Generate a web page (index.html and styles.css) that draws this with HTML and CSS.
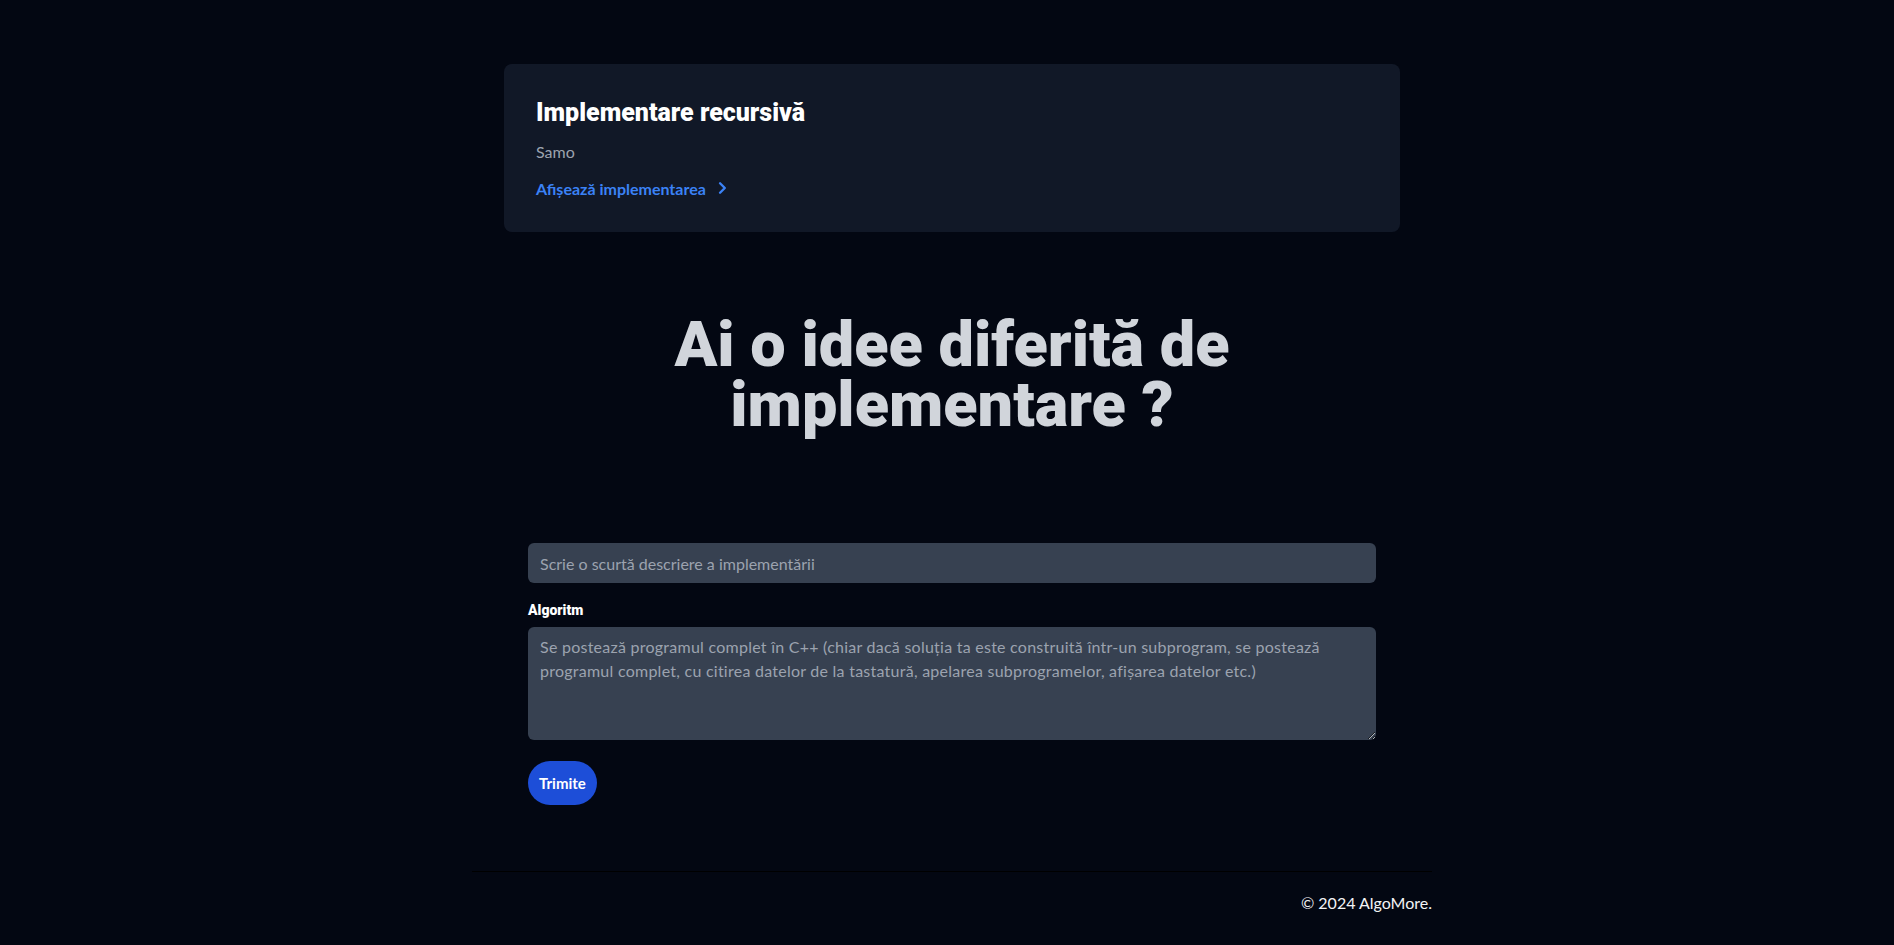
FILE: index.html
```html
<!DOCTYPE html>
<html lang="ro">
<head>
<meta charset="utf-8">
<title>AlgoMore</title>
<link rel="stylesheet" href="styles.css">
</head>
<body>
<div class="page">
  <main class="container">
    <div class="card">
      <h5 class="card-title">Implementare recursivă</h5>
      <p class="card-author">Samo</p>
      <a class="card-link" href="#">Afișează implementarea
        <svg class="chev" width="14" height="14" viewBox="0 0 10 10" aria-hidden="true"><path d="M3.6 1.6 L7 5 L3.6 8.4" fill="none" stroke="currentColor" stroke-width="1.7" stroke-linecap="round" stroke-linejoin="round"/></svg>
      </a>
    </div>

    <h2 class="headline">Ai o idee diferită de implementare ?</h2>

    <form class="form">
      <input class="field" type="text" placeholder="Scrie o scurtă descriere a implementării">
      <label class="label" for="alg">Algoritm</label>
      <textarea id="alg" class="area" rows="4" placeholder="Se postează programul complet în C++ (chiar dacă soluția ta este construită într-un subprogram, se postează programul complet, cu citirea datelor de la tastatură, apelarea subprogramelor, afișarea datelor etc.)"></textarea>
      <button class="btn" type="button">Trimite</button>
    </form>
  </main>
  <footer class="footer">
    <span>© 2024 AlgoMore.</span>
  </footer>
</div>
</body>
</html>
```

FILE: styles.css
```css
* { box-sizing: border-box; }
html, body { margin: 0; background: #030712; }
body {
  font-family: "Lato", "Open Sans", sans-serif;
  color: #e5e7eb;
  min-height: 945px;
}
.page {
  padding-left: 10px;
}
.container {
  width: 896px;
  margin: 0 auto;
  padding-top: 64px;
}
.card {
  background: #111827;
  border-radius: 8px;
  padding: 32px 32px 34px;
}
.card-title {
  margin: 2px 0 0;
  font-family: "Roboto", "Lato", sans-serif;
  font-size: 25px;
  line-height: 30px;
  font-weight: 900;
  color: #ffffff;
}
.card-author {
  margin: 12px 0 0;
  font-size: 16px;
  line-height: 24px;
  color: #9ca3af;
}
.card-link {
  margin-top: 14px;
  display: inline-flex;
  align-items: center;
  gap: 9px;
  height: 20px;
  font-size: 16px;
  font-weight: 700;
  color: #3b82f6;
  text-decoration: none;
}
.chev { display: block; }
.headline {
  margin: 83px auto 0;
  width: 640px;
  text-align: center;
  font-family: "Roboto", "Lato", sans-serif;
  font-size: 63px;
  line-height: 60px;
  font-weight: 900;
  color: #d1d5db;
}
.form {
  margin-top: 108px;
  padding: 0 24px;
  display: flex;
  flex-direction: column;
  align-items: flex-start;
}
.field, .area {
  width: 100%;
  background: #374151;
  border: 0;
  border-radius: 6px;
  padding: 8px 12px;
  font-family: inherit;
  font-size: 16px;
  line-height: 24px;
  color: #e5e7eb;
  outline: none;
}
.field { height: 40px; }
.field::placeholder, .area::placeholder { color: #9ca3af; opacity: 1; }
.label {
  margin-top: 17px;
  font-family: "Roboto", "Lato", sans-serif;
  font-size: 14px;
  line-height: 20px;
  font-weight: 900;
  color: #ffffff;
}
.area {
  margin-top: 7px;
  height: 113px;
  display: block;
  letter-spacing: 0.25px;
}
.btn {
  margin-top: 21px;
  height: 44px;
  padding: 0 11px;
  border: 0;
  border-radius: 22px;
  background: #1d4ed8;
  color: #ffffff;
  font-family: inherit;
  font-size: 15px;
  font-weight: 700;
}
.footer {
  width: 960px;
  margin: 66px auto 0;
  border-top: 1px solid #000000;
  padding-top: 19px;
  text-align: right;
  font-size: 16px;
  line-height: 24px;
  color: #f3f4f6;
}
```
